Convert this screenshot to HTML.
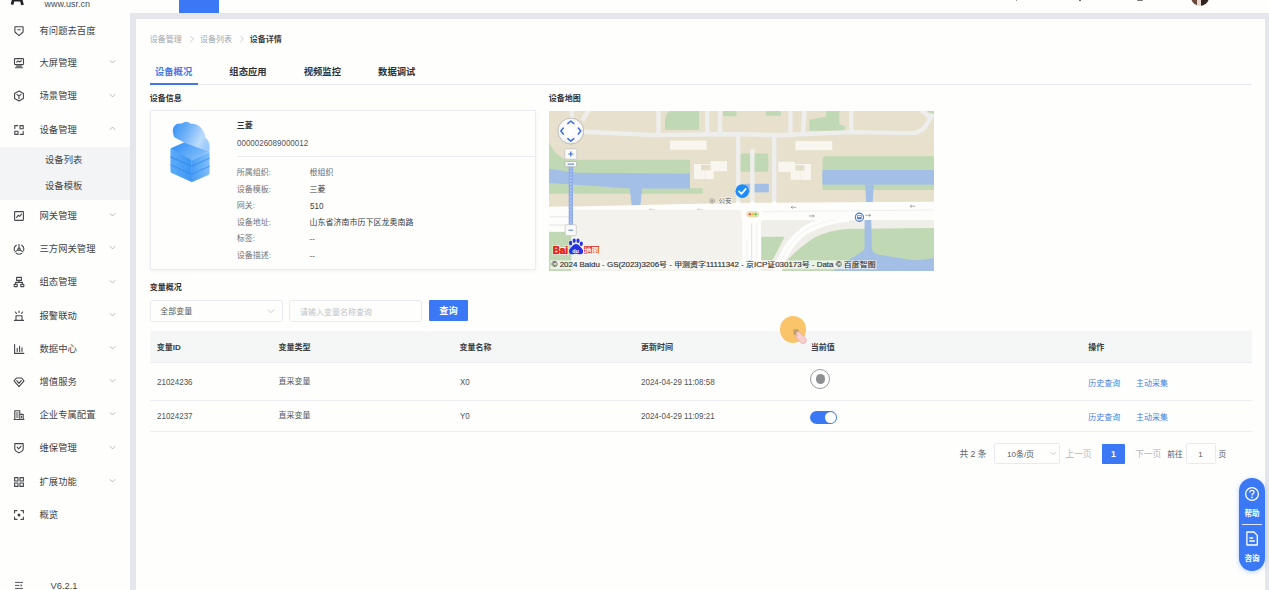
<!DOCTYPE html>
<html lang="zh-CN">
<head>
<meta charset="utf-8">
<title>设备详情</title>
<style>
*{box-sizing:border-box;margin:0;padding:0}
html,body{width:1269px;height:590px;overflow:hidden}
body{background:#e4e6eb;font-family:"Liberation Sans","Noto Sans CJK SC",sans-serif;color:#3a3c40;position:relative;font-size:8px}
.abs{position:absolute}
.t{position:absolute;white-space:nowrap;line-height:1}
.b{font-weight:bold}
#header{left:0;top:0;width:1269px;height:12.700px;background:#fefefd}
#hometab{left:179.300px;top:0;width:40px;height:12.600px;background:#3a78f6}
#sidebar{left:0;top:12px;width:129.800px;height:578px;background:#fefefd}
#panel{left:136.200px;top:18.900px;width:1128.600px;height:580px;background:#fefefd}
.mi{position:absolute;left:0;width:130px;height:33.2px}
.mi .lbl{position:absolute;left:39.5px;top:50%;transform:translateY(-50%);font-size:9.33px;line-height:1;color:#404246;white-space:nowrap}
.mi svg.ic{position:absolute;left:12.5px;top:50%;margin-top:-7.100px;width:12px;height:12px}
.mi svg.ar{position:absolute;left:109px;top:50%;margin-top:-5.800px;width:7px;height:7px}
#submenu{left:0;width:130px;background:#f3f4f5}
#submenu .s{position:absolute;left:45px;font-size:9.33px;line-height:1;color:#44464a;white-space:nowrap}
.card{position:absolute;background:#fefefd;border:.7px solid #ecedf1;box-shadow:0 1px 4px rgba(0,0,0,.05)}
.lab{color:#707378}
.val{color:#3a3c40}
.th{position:absolute;font-size:8px;font-weight:bold;color:#3a3c40;line-height:1;white-space:nowrap}
.td{position:absolute;font-size:8px;color:#55585d;line-height:1;white-space:nowrap}
.lnk{position:absolute;font-size:8px;color:#4a7fe0;line-height:1;white-space:nowrap}
.hl{position:absolute;height:.8px;background:#edeef1}
.box{position:absolute;border:.7px solid #e8eaee;border-radius:1.500px;background:#fefefd}

</style>
</head>
<body>
<div id="header" class="abs"></div>
<div id="hometab" class="abs"></div>
<div id="sidebar" class="abs"></div>
<div id="panel" class="abs"></div>
<div class="mi" style="top:15.1px"><svg class="ic" viewBox="0 0 12 12"><path fill="none" stroke="#45474b" stroke-width="1.1" stroke-linecap="round" stroke-linejoin="round" d="M1.9 1.7h8.2v5.300l-4.100 3.600-4.100-3.600z"/><path fill="none" stroke="#45474b" stroke-width="1.1" stroke-linecap="round" stroke-linejoin="round" d="M4.700 4.800h2.600"/></svg><span class="lbl">有问题去百度</span></div>
<div class="mi" style="top:47.7px"><svg class="ic" viewBox="0 0 12 12"><rect fill="none" stroke="#45474b" stroke-width="1.1" stroke-linecap="round" stroke-linejoin="round" x="1.5" y="1.6" width="9" height="6" rx=".6"/><path fill="none" stroke="#45474b" stroke-width="1.1" stroke-linecap="round" stroke-linejoin="round" d="M3.6 5.2l1.4-1.2 1.5 1 1.9-1.300M3.600 9.100h4.800M2.400 10.700h7.200"/></svg><span class="lbl">大屏管理</span><svg class="ar" viewBox="0 0 8 8"><path d="M1 2.6l3 3 3-3" fill="none" stroke="#9a9ca2" stroke-width=".8"/></svg></div>
<div class="mi" style="top:80.9px"><svg class="ic" viewBox="0 0 12 12"><path fill="none" stroke="#45474b" stroke-width="1.1" stroke-linecap="round" stroke-linejoin="round" d="M6 1l4.4 2.5v5L6 11 1.6 8.5v-5z"/><path fill="none" stroke="#45474b" stroke-width="1.1" stroke-linecap="round" stroke-linejoin="round" d="M4 4.3l2 1.9 2-1.9M6 6.2v2.6"/></svg><span class="lbl">场景管理</span><svg class="ar" viewBox="0 0 8 8"><path d="M1 2.6l3 3 3-3" fill="none" stroke="#9a9ca2" stroke-width=".8"/></svg></div>
<div class="mi" style="top:114.1px"><svg class="ic" viewBox="0 0 12 12"><rect fill="none" stroke="#45474b" stroke-width="1.1" stroke-linecap="round" stroke-linejoin="round" x="7" y="1.6" width="3.2" height="3.2"/><rect fill="none" stroke="#45474b" stroke-width="1.1" stroke-linecap="round" stroke-linejoin="round" x="1.8" y="7.2" width="3.2" height="3.2"/><path fill="none" stroke="#45474b" stroke-width="1.1" stroke-linecap="round" stroke-linejoin="round" d="M1.8 4.6v-3h3M10.2 7.4v3h-3"/></svg><span class="lbl">设备管理</span><svg class="ar" viewBox="0 0 8 8"><path d="M1 5.4l3-3 3 3" fill="none" stroke="#9a9ca2" stroke-width=".8"/></svg></div>
<div id="submenu" class="abs" style="top:147.3px;height:53.2px"><span class="s" style="top:8.6px">设备列表</span><span class="s" style="top:35.2px">设备模板</span></div>
<div class="mi" style="top:200.5px"><svg class="ic" viewBox="0 0 12 12"><rect fill="none" stroke="#45474b" stroke-width="1.1" stroke-linecap="round" stroke-linejoin="round" x="1.6" y="1.6" width="8.8" height="8.8" rx=".6"/><path fill="none" stroke="#45474b" stroke-width="1.1" stroke-linecap="round" stroke-linejoin="round" d="M3.6 7.4l1.6-2.2 1.5 1.2 1.8-2.2"/></svg><span class="lbl">网关管理</span><svg class="ar" viewBox="0 0 8 8"><path d="M1 2.6l3 3 3-3" fill="none" stroke="#9a9ca2" stroke-width=".8"/></svg></div>
<div class="mi" style="top:233.7px"><svg class="ic" viewBox="0 0 12 12"><path fill="none" stroke="#45474b" stroke-width="1.1" stroke-linecap="round" stroke-linejoin="round" d="M3.3 2.2a4.7 4.7 0 0 0-1.9 5.2M8.7 2.2a4.7 4.7 0 0 1 1.9 5.2M3.3 10.3a4.7 4.7 0 0 0 5.4 0"/><circle fill="none" stroke="#45474b" stroke-width="1.1" stroke-linecap="round" stroke-linejoin="round" cx="6" cy="6.2" r="1.2"/><path fill="none" stroke="#45474b" stroke-width="1.1" stroke-linecap="round" stroke-linejoin="round" d="M6 1.2v3.8M4.9 6.9l-2.8 2M7.1 6.9l2.8 2"/></svg><span class="lbl">三方网关管理</span><svg class="ar" viewBox="0 0 8 8"><path d="M1 2.6l3 3 3-3" fill="none" stroke="#9a9ca2" stroke-width=".8"/></svg></div>
<div class="mi" style="top:266.9px"><svg class="ic" viewBox="0 0 12 12"><rect fill="none" stroke="#45474b" stroke-width="1.1" stroke-linecap="round" stroke-linejoin="round" x="3.6" y="1.4" width="4.8" height="3" /><path fill="none" stroke="#45474b" stroke-width="1.1" stroke-linecap="round" stroke-linejoin="round" d="M6 4.4v2M2.6 8.2v-1.8h6.8v1.8"/><rect fill="none" stroke="#45474b" stroke-width="1.1" stroke-linecap="round" stroke-linejoin="round" x="1.2" y="8.2" width="3" height="2.4"/><rect fill="none" stroke="#45474b" stroke-width="1.1" stroke-linecap="round" stroke-linejoin="round" x="7.8" y="8.2" width="3" height="2.4"/></svg><span class="lbl">组态管理</span><svg class="ar" viewBox="0 0 8 8"><path d="M1 2.6l3 3 3-3" fill="none" stroke="#9a9ca2" stroke-width=".8"/></svg></div>
<div class="mi" style="top:300.1px"><svg class="ic" viewBox="0 0 12 12"><path fill="none" stroke="#45474b" stroke-width="1.1" stroke-linecap="round" stroke-linejoin="round" d="M3 10.2v-4.4h6v4.4M1.4 10.4h9.2M6 1v1.6M2.4 2l1 1.4M9.6 2l-1 1.4"/></svg><span class="lbl">报警联动</span><svg class="ar" viewBox="0 0 8 8"><path d="M1 2.6l3 3 3-3" fill="none" stroke="#9a9ca2" stroke-width=".8"/></svg></div>
<div class="mi" style="top:333.3px"><svg class="ic" viewBox="0 0 12 12"><path fill="none" stroke="#45474b" stroke-width="1.1" stroke-linecap="round" stroke-linejoin="round" d="M1.6 1.6v8.8h9.2M4.2 8.4v-3M6.6 8.4v-5M9 8.4v-3.6"/></svg><span class="lbl">数据中心</span><svg class="ar" viewBox="0 0 8 8"><path d="M1 2.6l3 3 3-3" fill="none" stroke="#9a9ca2" stroke-width=".8"/></svg></div>
<div class="mi" style="top:366.5px"><svg class="ic" viewBox="0 0 12 12"><path fill="none" stroke="#45474b" stroke-width="1.1" stroke-linecap="round" stroke-linejoin="round" d="M3.4 2h5.2l2.4 2.8L6 10.6 1 4.8z"/><path fill="none" stroke="#45474b" stroke-width="1.1" stroke-linecap="round" stroke-linejoin="round" d="M3.8 4.6L6 7.4l2.2-2.8"/></svg><span class="lbl">增值服务</span><svg class="ar" viewBox="0 0 8 8"><path d="M1 2.6l3 3 3-3" fill="none" stroke="#9a9ca2" stroke-width=".8"/></svg></div>
<div class="mi" style="top:399.7px"><svg class="ic" viewBox="0 0 12 12"><path fill="none" stroke="#45474b" stroke-width="1.1" stroke-linecap="round" stroke-linejoin="round" d="M1.8 10.4v-8.6h5v8.6M6.8 5.4h3.4v5M1 10.5h10"/><path fill="none" stroke="#45474b" stroke-width="1.1" stroke-linecap="round" stroke-linejoin="round" d="M3.4 4h1.8M3.4 6h1.8M3.4 8h1.8M8.6 7.4v1.4" stroke-width="1"/></svg><span class="lbl">企业专属配置</span><svg class="ar" viewBox="0 0 8 8"><path d="M1 2.6l3 3 3-3" fill="none" stroke="#9a9ca2" stroke-width=".8"/></svg></div>
<div class="mi" style="top:432.9px"><svg class="ic" viewBox="0 0 12 12"><path fill="none" stroke="#45474b" stroke-width="1.1" stroke-linecap="round" stroke-linejoin="round" d="M1.8 1.6h8.4v5.3c0 1.6-2 2.9-4.2 3.8-2.2-.9-4.2-2.2-4.2-3.8z"/><path fill="none" stroke="#45474b" stroke-width="1.1" stroke-linecap="round" stroke-linejoin="round" d="M4.1 5.2l1.6 1.6 2.4-2.6"/></svg><span class="lbl">维保管理</span><svg class="ar" viewBox="0 0 8 8"><path d="M1 2.6l3 3 3-3" fill="none" stroke="#9a9ca2" stroke-width=".8"/></svg></div>
<div class="mi" style="top:466.1px"><svg class="ic" viewBox="0 0 12 12"><rect fill="none" stroke="#45474b" stroke-width="1.1" stroke-linecap="round" stroke-linejoin="round" x="1.6" y="1.6" width="3.4" height="3.4"/><rect fill="none" stroke="#45474b" stroke-width="1.1" stroke-linecap="round" stroke-linejoin="round" x="7" y="1.6" width="3.4" height="3.4"/><rect fill="none" stroke="#45474b" stroke-width="1.1" stroke-linecap="round" stroke-linejoin="round" x="1.6" y="7" width="3.4" height="3.4"/><rect fill="none" stroke="#45474b" stroke-width="1.1" stroke-linecap="round" stroke-linejoin="round" x="7" y="7" width="3.4" height="3.4"/></svg><span class="lbl">扩展功能</span><svg class="ar" viewBox="0 0 8 8"><path d="M1 2.6l3 3 3-3" fill="none" stroke="#9a9ca2" stroke-width=".8"/></svg></div>
<div class="mi" style="top:499.3px"><svg class="ic" viewBox="0 0 12 12"><path fill="none" stroke="#45474b" stroke-width="1.1" stroke-linecap="round" stroke-linejoin="round" d="M1.6 4v-2.4h2.4M8 1.6h2.4v2.4M10.4 8v2.4h-2.4M4 10.4h-2.4v-2.4"/><circle cx="6" cy="6" r="1.5" fill="#3f4145"/></svg><span class="lbl">概览</span></div>
<svg class="abs" style="left:13.5px;top:581px;width:10px;height:9px" viewBox="0 0 10 9"><path d="M1 1.4h8M1 4.4h4.4M1 7.4h8" fill="none" stroke="#55575b" stroke-width="1"/><path d="M6.6 3l1.8 1.4-1.8 1.4z" fill="#55575b"/></svg>
<span class="t" style="left:50.5px;top:582.300px;font-size:9.330px;color:#45474b">V6.2.1</span>
<svg class="abs" style="left:10px;top:0;width:16px;height:7px" viewBox="0 0 16 7"><path d="M3.6 -1.5l-1.6 6.200M10.800 -1.500l1.700 6.500M3 0.200h8" stroke="#1f2124" stroke-width="2.700" fill="none"/></svg>
<span class="t" style="left:44.5px;top:-.1px;font-size:9px;color:#4a4c50">www.usr.cn</span>
<div class="abs" style="left:1191px;top:-12px;width:18px;height:18px;border-radius:50%;background:linear-gradient(90deg,#6b4a3e 0 35%,#e8d9cf 35% 55%,#2e2422 55%)"></div>
<div class="abs" style="left:1015.500px;top:0;width:1.500px;height:1px;background:#999"></div>
<div class="abs" style="left:1078.500px;top:0;width:2.500px;height:1px;background:#666"></div>
<div class="abs" style="left:1137px;top:0;width:6px;height:1.400px;background:#777;border-radius:0 0 3px 3px"></div>
<span class="t" style="left:149.800px;top:36px;font-size:8px;color:#a3a6ac">设备管理</span>
<span class="t" style="left:200px;top:36px;font-size:8px;color:#a3a6ac">设备列表</span>
<span class="t b" style="left:249.800px;top:36px;font-size:8px;color:#3a3c40">设备详情</span>
<svg class="abs" style="left:189.2px;top:35.400px;width:6px;height:8px" viewBox="0 0 6 8"><path d="M1.200 .800l3.200 3.200-3.200 3.200" fill="none" stroke="#bdc0c6" stroke-width=".75"/></svg>
<svg class="abs" style="left:239px;top:35.400px;width:6px;height:8px" viewBox="0 0 6 8"><path d="M1.200 .800l3.200 3.200-3.200 3.200" fill="none" stroke="#bdc0c6" stroke-width=".75"/></svg>
<span class="t b" style="left:154.9px;top:68.400px;font-size:9.330px;color:#3f78ee">设备概况</span>
<span class="t b" style="left:229.3px;top:68.400px;font-size:9.330px;color:#2f3135">组态应用</span>
<span class="t b" style="left:303.7px;top:68.400px;font-size:9.330px;color:#2f3135">视频监控</span>
<span class="t b" style="left:378.1px;top:68.400px;font-size:9.330px;color:#2f3135">数据调试</span>
<div class="hl" style="left:149.700px;top:84.100px;width:1102px;height:.8px;background:#e6e8ee"></div>
<div class="abs" style="left:149.500px;top:83.400px;width:48.200px;height:1.400px;background:#3f78ee"></div>
<span class="t b" style="left:149.700px;top:95.400px;font-size:8px;color:#2f3135">设备信息</span>
<span class="t b" style="left:548.800px;top:95.400px;font-size:8px;color:#2f3135">设备地图</span>
<div class="card" style="left:149.500px;top:110.300px;width:386.100px;height:160.200px"></div>
<svg class="abs" style="left:170px;top:120.500px;width:40px;height:61.500px" viewBox="105 73 278 427">
<defs>
<linearGradient id="cg" x1="0" y1=".2" x2="1" y2=".6"><stop offset="0" stop-color="#3c95f5"/><stop offset=".4" stop-color="#74b4f8"/><stop offset=".78" stop-color="#bddcfc"/><stop offset="1" stop-color="#9ccafa"/></linearGradient>
<linearGradient id="tg" x1="0" y1="0" x2="1" y2=".5"><stop offset="0" stop-color="#2a8cf5"/><stop offset="1" stop-color="#86bffa"/></linearGradient>
<linearGradient id="lg" x1="0" y1="0" x2="1" y2="0"><stop offset="0" stop-color="#5babf8"/><stop offset="1" stop-color="#3f96f4"/></linearGradient>
<linearGradient id="rg" x1="0" y1="0" x2="1" y2="0"><stop offset="0" stop-color="#4a9df5"/><stop offset="1" stop-color="#80bffa"/></linearGradient>
</defs>
<path d="M108 268q0-8 8-4l140 62 2 172-142-64q-8-4-8-12z" fill="url(#lg)"/>
<path d="M256 346l116-56q8-4 8 6v140q0 8-8 12l-114 50z" fill="url(#rg)"/>
<path d="M108 322l150 66 122-58M108 377l150 66 122-58" fill="none" stroke="#2f86ec" stroke-width="8" opacity=".6"/>
<path d="M110 262l96-42 174 64-120 64z" fill="url(#tg)"/>
<path d="M125 150c-5-40 25-70 60-58 15-17 50-17 65 0 50-7 95 38 102 98 23 15 33 50 28 95l-180-63-10-7-55-30q-8-15-10-35z" fill="url(#cg)"/>
</svg>
<span class="t b" style="left:236.800px;top:121.700px;font-size:8px;color:#2f3135">三菱</span>
<span class="t" style="left:236.800px;top:138.900px;font-size:8.700px;transform:scaleX(.92);transform-origin:0 50%;color:#505358">0000026089000012</span>
<div class="hl" style="left:236.800px;top:156.400px;width:298.800px"></div>
<span class="t lab" style="left:236.800px;top:169.0px;font-size:8px">所属组织:</span>
<span class="t val" style="left:309.500px;top:169.0px;font-size:8px;color:#6a6d72">根组织</span>
<span class="t lab" style="left:236.800px;top:185.5px;font-size:8px">设备模板:</span>
<span class="t val" style="left:309.500px;top:185.5px;font-size:8px">三菱</span>
<span class="t lab" style="left:236.800px;top:202.0px;font-size:8px">网关:</span>
<span class="t val" style="left:309.500px;top:202.0px;font-size:8px;font-size:8.700px;transform:scaleX(.92);transform-origin:0 50%;margin-top:-.4px">510</span>
<span class="t lab" style="left:236.800px;top:218.5px;font-size:8px">设备地址:</span>
<span class="t val" style="left:309.500px;top:218.5px;font-size:8px">山东省济南市历下区龙奥南路</span>
<span class="t lab" style="left:236.800px;top:235.0px;font-size:8px">标签:</span>
<span class="t val" style="left:309.500px;top:235.0px;font-size:8px">--</span>
<span class="t lab" style="left:236.800px;top:251.5px;font-size:8px">设备描述:</span>
<span class="t val" style="left:309.500px;top:251.5px;font-size:8px">--</span>
<svg class="abs" id="map" style="left:548.900px;top:110.600px;width:385px;height:160.100px" viewBox="0 0 385 159.4" preserveAspectRatio="none">
<rect width="385" height="159.4" fill="#e6e0cd"/>
<g fill="#c0d9b4">
<path d="M121 0h29v19h-34v-11q1-6 5-8z"/>
<rect x="174" y="0" width="13.5" height="5.2"/>
<rect x="217" y="0" width="15" height="4.7" rx="1.5"/>
<path d="M277 0h13.3v13.4l5.5 1.6v4.7h-35.4v-11l16.6-3z"/>
<path d="M378 0h7v5z"/>
<path d="M0 31q5 12 17 17.600h124v14h-141z"/>
<path d="M0 71h141v6h12.700v5.500h-153.700z"/>
<rect x="191.300" y="42.200" width="28" height="18.400" rx="2"/>
<path d="M277 45h108v33.700h-111.500v-30.200q0-3.500 3.500-3.500z"/>
<rect x="0" y="120.200" width="23" height="40"/>
<path d="M212.300 125.300h21.500q2 0 .8 1.800l-11 21.500h-11.300z"/>
<path d="M385 116.200l-85 .9q-20 1-35 9-17 11-28.200 24l-4.800 9.400h153z"/>
</g>
<g fill="#a4bfe6">
<path d="M0 57.5l27.6 4 113.4 .8v14.9h-60l-81-5.5z"/>
<path d="M80.5 76h13l-2.3 19h-8.4z"/>
<rect x="195.8" y="72.5" width="24" height="8.5"/>
<rect x="273.400" y="58.800" width="111.600" height="14.500"/>
<path d="M316 73h9l-1.4 18h-6.4z"/>
</g>
<g fill="none" stroke="#eeeeec" stroke-width="4.4">
<path d="M22.8 0v8"/>
<path d="M39.500-1l-6 11"/>
<path d="M34 20.600l72 3.400 60-.8 30-.2 34 1.200 71-3.200 60 1q10 0 15-6l8-13"/>
<path d="M372-1l11 9"/>
<path d="M109.500 0v22"/>
<path d="M158.300 0v22"/>
<path d="M171 0v22"/>
<path d="M241.500 0v22"/>
<path d="M255.500 0l-1.500 22"/>
<path d="M302.300 0v20"/>
<path d="M189.200 22v70"/>
<path d="M203.300 37.800v54"/>
<path d="M225.200 23v69"/>
</g>
<g fill="#f8f6ef">
<rect x="121" y="29.500" width="36.600" height="9.100"/>
<rect x="145" y="52.800" width="19.700" height="15"/>
<rect x="161.500" y="50" width="16.500" height="10"/>
<rect x="246.300" y="30" width="37" height="9"/>
<rect x="229.200" y="50.400" width="16.300" height="10.300"/>
<rect x="241.800" y="52.800" width="20.200" height="15.800"/>
</g>
<rect x="152" y="53.600" width="9.500" height="5.400" fill="#e3ddc9"/>
<rect x="246.300" y="54" width="9.100" height="5.400" fill="#e3ddc9"/>
<path d="M156 59v8.800M251.300 59.400v9" stroke="#ebe8dd" stroke-width=".5" fill="none"/>
<path d="M211.600 107h173.400v9.400l-85 .9q-20 1-35 9-17 11-28.200 24l-4.800 9.400h-20.400z" fill="#efeee9"/>
<path d="M212.300 125.300h21.500q2 0 .8 1.800l-11 21.500h-11.300z" fill="#c0d9b4"/>
<path d="M300 106C280 107 262 114 252 122S234 142 228 160" fill="none" stroke="#fdfdfc" stroke-width="8.500"/>
<path d="M290 108C276 109 262 114 252 122S234 142 228 160" fill="none" stroke="#ededeb" stroke-width=".6"/>
<path d="M315.600 107h6.600l.8 30q1 5 6 6l35 5.700q10 0 20.800-2.400v13.100h-101q9-5 17-12 12-6 14.800-10z" fill="#a4bfe6"/>
<path d="M0 95.600l150-3.300 40-.8 195-1.200v18.200h-385z" fill="#fdfdfc"/>
<path d="M0 95.300h24v25h-24z" fill="#fdfdfc"/>
<path d="M0 105.400h24M0 113.600h24" stroke="#e6e6e4" stroke-width="1" fill="none"/>
<path d="M185 93l4.200-4 4.200 4zM199 93l4.300-4 4.300 4zM221 93l4.200-4 4.200 4z" fill="#fdfdfc"/>
<rect x="192.500" y="100" width="19.500" height="60" fill="#fdfdfc"/>
<path d="M202.600 112v48" stroke="#e6e6e4" stroke-width="1.200" fill="none"/>
<path d="M198 128v32M207.500 112v48" stroke="#efefed" stroke-width=".6" fill="none"/>
<path d="M209 108h6q-3 1-3 4v1h-3z" fill="#fdfdfc"/>
<path d="M214 100.200l171-1.600" stroke="#e9e9e7" stroke-width=".7" fill="none"/>
<g fill="none" stroke="#7a7a78" stroke-width=".6">
<path d="M105.6 98.6h-5.200m1.600-1.300l-1.600 1.300 1.600 1.300"/>
<path d="M153.6 98.6h-5.200m1.600-1.300l-1.600 1.300 1.600 1.300"/>
</g>
<rect x="22.400" y="98.200" width="169.900" height="62" fill="#f3f2ed"/>
<g fill="none" stroke="#7a7a78" stroke-width=".6">
<path d="M247.29999999999998 95.9h-5.200m1.600-1.300l-1.600 1.300 1.600 1.300"/>
<path d="M366.3 94.8h-5.200m1.600-1.300l-1.600 1.300 1.600 1.300"/>
<path d="M259.9 104.5h5.200m-1.600-1.300l1.600 1.300-1.600 1.300"/>
<path d="M316.4 103.9h5.200m-1.600-1.300l1.600 1.300-1.600 1.300"/>
</g>
<rect x="197.800" y="100.200" width="11.900" height="5.300" rx="2.600" fill="#f5e9b8" stroke="#c9c2a0" stroke-width=".5"/>
<circle cx="200.800" cy="102.850" r="1.300" fill="#e8605a"/><circle cx="203.750" cy="102.850" r="1.300" fill="#f0c23e"/><circle cx="206.700" cy="102.850" r="1.300" fill="#6cc15c"/>
<circle cx="310.400" cy="105.800" r="4.100" fill="#f4f7fd" stroke="#4a76c8" stroke-width="1.100"/>
<rect x="308.200" y="103.500" width="4.400" height="4.200" rx=".9" fill="#4a76c8"/><rect x="308.900" y="104.200" width="3" height="1.500" fill="#f4f7fd"/>
<circle cx="163.100" cy="89.600" r="2.300" fill="none" stroke="#8a8a88" stroke-width=".6"/><circle cx="163.100" cy="89.600" r=".9" fill="#8a8a88"/>
<text x="169.500" y="91.900" font-size="6.500" fill="#5a5a58" stroke="#fbfaf4" stroke-width="1.200" paint-order="stroke" font-family="'Liberation Sans','Noto Sans CJK SC',sans-serif">公安</text>
<circle cx="193.300" cy="79.800" r="6.800" fill="#1e8bf7"/>
<path d="M190 80l2.400 2.500 4.400-5" fill="none" stroke="#fff" stroke-width="1.700" stroke-linecap="round" stroke-linejoin="round"/>
<rect x="1.500" y="148.700" width="326" height="8.800" fill="#fafaf8" opacity=".72"/>
<text x="2.600" y="155.700" font-size="7.330" fill="#333" stroke="#333" stroke-width=".15" textLength="324" lengthAdjust="spacingAndGlyphs" font-family="'Liberation Sans','Noto Sans CJK SC',sans-serif">© 2024 Baidu - GS(2023)3206号 - 甲测资字11111342 - 京ICP证030173号 - Data © 百度智图</text>
<rect x="19.700" y="52" width="4.300" height="62" fill="#8fade9"/>
<path d="M21.850 56v56" stroke="#b9ccf2" stroke-width="1.400" stroke-dasharray="1.600 1.600" fill="none"/>
<defs><radialGradient id="pg" cx=".5" cy=".45" r=".6"><stop offset="0" stop-color="#fff"/><stop offset=".75" stop-color="#f9f9f9"/><stop offset="1" stop-color="#e3e3e3"/></radialGradient></defs>
<circle cx="21.800" cy="20" r="12.900" fill="url(#pg)" stroke="#a9a9a7" stroke-width=".7"/>
<g fill="none" stroke="#3f6fd6" stroke-width="1.500" stroke-linecap="round" stroke-linejoin="round">
<path d="M18.800 12.500l3-2.500 3 2.500M18.800 27.500l3 2.500 3-2.500M14.300 17l-2.500 3 2.500 3M29.300 17l2.500 3-2.500 3"/>
</g>
<rect x="15.700" y="37.700" width="12.200" height="10.300" rx="1.300" fill="#fbfbfb" stroke="#b5b5b3" stroke-width=".6"/>
<path d="M19.300 42.800h5M21.800 40.300v5" stroke="#3f6fd6" stroke-width="1.200" fill="none"/>
<rect x="16" y="50.300" width="11.600" height="5.200" rx="1.200" fill="#f7f7f7" stroke="#a5a5a3" stroke-width=".6"/>
<path d="M18.600 52.900h6.400" stroke="#5b86dd" stroke-width="1.100" fill="none"/>
<rect x="16.200" y="113.200" width="11.100" height="11" rx="1.300" fill="#fbfbfb" stroke="#b5b5b3" stroke-width=".6"/>
<path d="M19.500 118.700h4.600" stroke="#5b86dd" stroke-width="1.100" fill="none"/>
<g transform="translate(0,-1.700)">
<text x="3.700" y="144.300" font-size="10.800" font-weight="bold" fill="#e1261c" stroke="#fff" stroke-width="1.900" paint-order="stroke" stroke-linejoin="round" font-family="'Liberation Sans','Noto Sans CJK SC',sans-serif" textLength="15.300" lengthAdjust="spacingAndGlyphs">Bai</text>
<text x="3.700" y="144.300" font-size="10.800" font-weight="bold" fill="#e1261c" stroke="#e1261c" stroke-width=".45" font-family="'Liberation Sans','Noto Sans CJK SC',sans-serif" textLength="15.300" lengthAdjust="spacingAndGlyphs" aria-hidden="true">Bai</text>
<g fill="#2932e1" stroke="#fff" stroke-width=".9" paint-order="stroke">
<ellipse cx="21.600" cy="133.200" rx="1.700" ry="2.300"/><ellipse cx="25.200" cy="130.800" rx="1.600" ry="2.200"/><ellipse cx="29" cy="130.900" rx="1.600" ry="2.200"/><ellipse cx="32.300" cy="133.800" rx="1.600" ry="2.200"/>
<path d="M27 134.200c2.200 0 3.400 1.600 4.800 3.200 1.600 1.700 2.600 2.600 2.400 4.400-.3 2-2 2.600-3.600 2.500-1.500-.1-2.300-.5-3.600-.5s-2.200.4-3.700.5c-1.600.1-3.200-.6-3.400-2.500-.2-1.800.8-2.700 2.300-4.400 1.400-1.600 2.600-3.200 4.800-3.200z"/>
</g>
<text x="23.200" y="143" font-size="5.400" font-weight="bold" fill="#fff" font-family="'Liberation Sans','Noto Sans CJK SC',sans-serif">du</text>
<rect x="34.700" y="135.800" width="15.800" height="8.300" rx=".8" fill="#e1261c" stroke="#fff" stroke-width=".9"/>
<text x="35.300" y="142.700" font-size="7.300" font-weight="bold" fill="#fff" font-family="'Liberation Sans','Noto Sans CJK SC',sans-serif">地图</text>
</g>
</svg>
<span class="t b" style="left:149.700px;top:284.400px;font-size:8px;color:#2f3135">变量概况</span>
<div class="box" style="left:149.600px;top:300.300px;width:133.400px;height:21.600px"></div>
<span class="t" style="left:160.300px;top:308px;font-size:8px;color:#55585d">全部变量</span>
<svg class="abs" style="left:266.700px;top:306.800px;width:8px;height:8px" viewBox="0 0 8 8"><path d="M1 2.600l3 3 3-3" fill="none" stroke="#b5b8be" stroke-width=".8"/></svg>
<div class="box" style="left:289.100px;top:300.300px;width:132.700px;height:21.600px"></div>
<span class="t" style="left:300px;top:308.500px;font-size:8px;color:#c0c3c9">请输入变量名称查询</span>
<div class="abs" style="left:428.500px;top:300.400px;width:39.900px;height:20.900px;background:#3a78f6;border-radius:1px"></div>
<span class="t b" style="left:439.300px;top:307.400px;font-size:9.200px;color:#fff">查询</span>
<div class="abs" style="left:149.700px;top:331.400px;width:1102px;height:30.800px;background:#f5f6f6"></div>
<span class="th" style="left:156.8px;top:344.200px">变量ID</span>
<span class="th" style="left:278.5px;top:344.200px">变量类型</span>
<span class="th" style="left:459.5px;top:344.200px">变量名称</span>
<span class="th" style="left:640.9px;top:344.200px">更新时间</span>
<span class="th" style="left:810.8px;top:344.200px">当前值</span>
<span class="th" style="left:1088.3px;top:344.200px">操作</span>
<div class="hl" style="left:149.700px;top:362.100px;width:1102px"></div>
<div class="hl" style="left:149.700px;top:399.900px;width:1102px"></div>
<div class="hl" style="left:149.700px;top:431.400px;width:1102px"></div>
<span class="td" style="left:156.8px;top:378.2px;font-size:8.700px;transform:scaleX(.92);transform-origin:0 50%;margin-top:-.4px;color:#505358">21024236</span>
<span class="td" style="left:278.5px;top:378.2px">直采变量</span>
<span class="td" style="left:459.5px;top:378.2px;font-size:8.700px;transform:scaleX(.92);transform-origin:0 50%;margin-top:-.4px;color:#505358">X0</span>
<span class="td" style="left:640.9px;top:378.2px;font-size:8.700px;transform:scaleX(.92);transform-origin:0 50%;margin-top:-.4px;color:#505358">2024-04-29 11:08:58</span>
<span class="lnk" style="left:1088.300px;top:379.59999999999997px">历史查询</span>
<span class="lnk" style="left:1135.900px;top:379.59999999999997px">主动采集</span>
<span class="td" style="left:156.8px;top:412.4px;font-size:8.700px;transform:scaleX(.92);transform-origin:0 50%;margin-top:-.4px;color:#505358">21024237</span>
<span class="td" style="left:278.5px;top:412.4px">直采变量</span>
<span class="td" style="left:459.5px;top:412.4px;font-size:8.700px;transform:scaleX(.92);transform-origin:0 50%;margin-top:-.4px;color:#505358">Y0</span>
<span class="td" style="left:640.9px;top:412.4px;font-size:8.700px;transform:scaleX(.92);transform-origin:0 50%;margin-top:-.4px;color:#505358">2024-04-29 11:09:21</span>
<span class="lnk" style="left:1088.300px;top:413.79999999999995px">历史查询</span>
<span class="lnk" style="left:1135.900px;top:413.79999999999995px">主动采集</span>
<div class="abs" style="left:810.300px;top:368.900px;width:20px;height:20px;border-radius:50%;border:.9px solid #9b9da1;background:#fefefd"></div>
<div class="abs" style="left:815.600px;top:374.200px;width:9.400px;height:9.400px;border-radius:50%;background:#8d8f92"></div>
<div class="abs" style="left:810.300px;top:410.500px;width:27px;height:13.400px;border-radius:7px;background:#3a78f6"></div>
<div class="abs" style="left:825.200px;top:411.800px;width:10.800px;height:10.800px;border-radius:50%;background:#fefefd"></div>
<div class="abs" style="left:779.600px;top:316.400px;width:26.400px;height:26.400px;border-radius:50%;background:#fac46b"></div>
<svg class="abs" style="left:792.500px;top:328.500px;width:17px;height:17px" viewBox="0 0 17 17"><rect x=".5" y=".3" width="5" height="5.500" fill="#9a8766" opacity=".6"/><path d="M3.300 3.600c1.300-1.300 2.900-1 3.600-.1l4.600 4.400c2.100 2.200 2.300 4.500.8 5.800-1.600 1.400-3.800.8-5.500-1.100l-3.500-3.800c-1-1.100-.4-2.500 1-2.100l-.9-1.100c-.5-.8-.1-1.400-.1-2z" fill="#f7d0cd" stroke="#e0a09c" stroke-width=".7"/></svg>
<span class="t" style="left:959.500px;top:450.100px;font-size:8.670px;color:#5e6166">共 2 条</span>
<div class="box" style="left:994.200px;top:443px;width:65.700px;height:21.200px"></div>
<span class="t" style="left:1007px;top:450.500px;font-size:8px;color:#55585d">10条/页</span>
<svg class="abs" style="left:1049.600px;top:450.300px;width:6.500px;height:6.500px" viewBox="0 0 8 8"><path d="M1 2.600l3 3 3-3" fill="none" stroke="#b5b8be" stroke-width=".9"/></svg>
<span class="t" style="left:1065.600px;top:450.300px;font-size:8.670px;color:#b4b7bd">上一页</span>
<div class="abs" style="left:1102.200px;top:443.600px;width:22.500px;height:20px;background:#3a78f6;border-radius:1px"></div>
<span class="t b" style="left:1111px;top:450.100px;font-size:8.670px;color:#fff">1</span>
<span class="t" style="left:1135.300px;top:450.300px;font-size:8.670px;color:#b4b7bd">下一页</span>
<span class="t" style="left:1167.300px;top:450.800px;font-size:7.700px;color:#55585d">前往</span>
<div class="box" style="left:1185.500px;top:443px;width:30.300px;height:21.200px"></div>
<span class="t" style="left:1198.300px;top:450.500px;font-size:8px;color:#55585d">1</span>
<span class="t" style="left:1218.500px;top:450.800px;font-size:7.700px;color:#55585d">页</span>
<div class="abs" style="left:1238.800px;top:478.300px;width:26.500px;height:92.300px;border-radius:13.300px;background:#3a78f6;box-shadow:0 1px 5px rgba(58,120,246,.35)"></div>
<svg class="abs" style="left:1244px;top:485.700px;width:16px;height:16px" viewBox="0 0 15 15"><circle cx="7.500" cy="7.500" r="6" fill="none" stroke="#fff" stroke-width="1.200"/><path d="M5.600 6c0-1.200.8-1.900 1.900-1.900s1.900.7 1.900 1.700c0 1.400-1.900 1.500-1.900 3" fill="none" stroke="#fff" stroke-width="1.200"/><circle cx="7.500" cy="10.700" r=".8" fill="#fff"/></svg>
<span class="t b" style="left:1244.400px;top:509.600px;font-size:7.600px;color:#fff">帮助</span>
<div class="abs" style="left:1242px;top:524px;width:19.500px;height:.7px;background:#dfe8fd"></div>
<svg class="abs" style="left:1245.200px;top:531.300px;width:14.200px;height:15px" viewBox="0 0 13 15"><path d="M1.300 1h7l3.400 3.400v9.600h-10.400z" fill="none" stroke="#fff" stroke-width="1.300" stroke-linejoin="round"/><path d="M3.800 7h3.800M3.800 10h5.400" stroke="#fff" stroke-width="1.300" fill="none"/></svg>
<span class="t b" style="left:1244.400px;top:554.600px;font-size:7.600px;color:#fff">咨询</span>
</body>
</html>
